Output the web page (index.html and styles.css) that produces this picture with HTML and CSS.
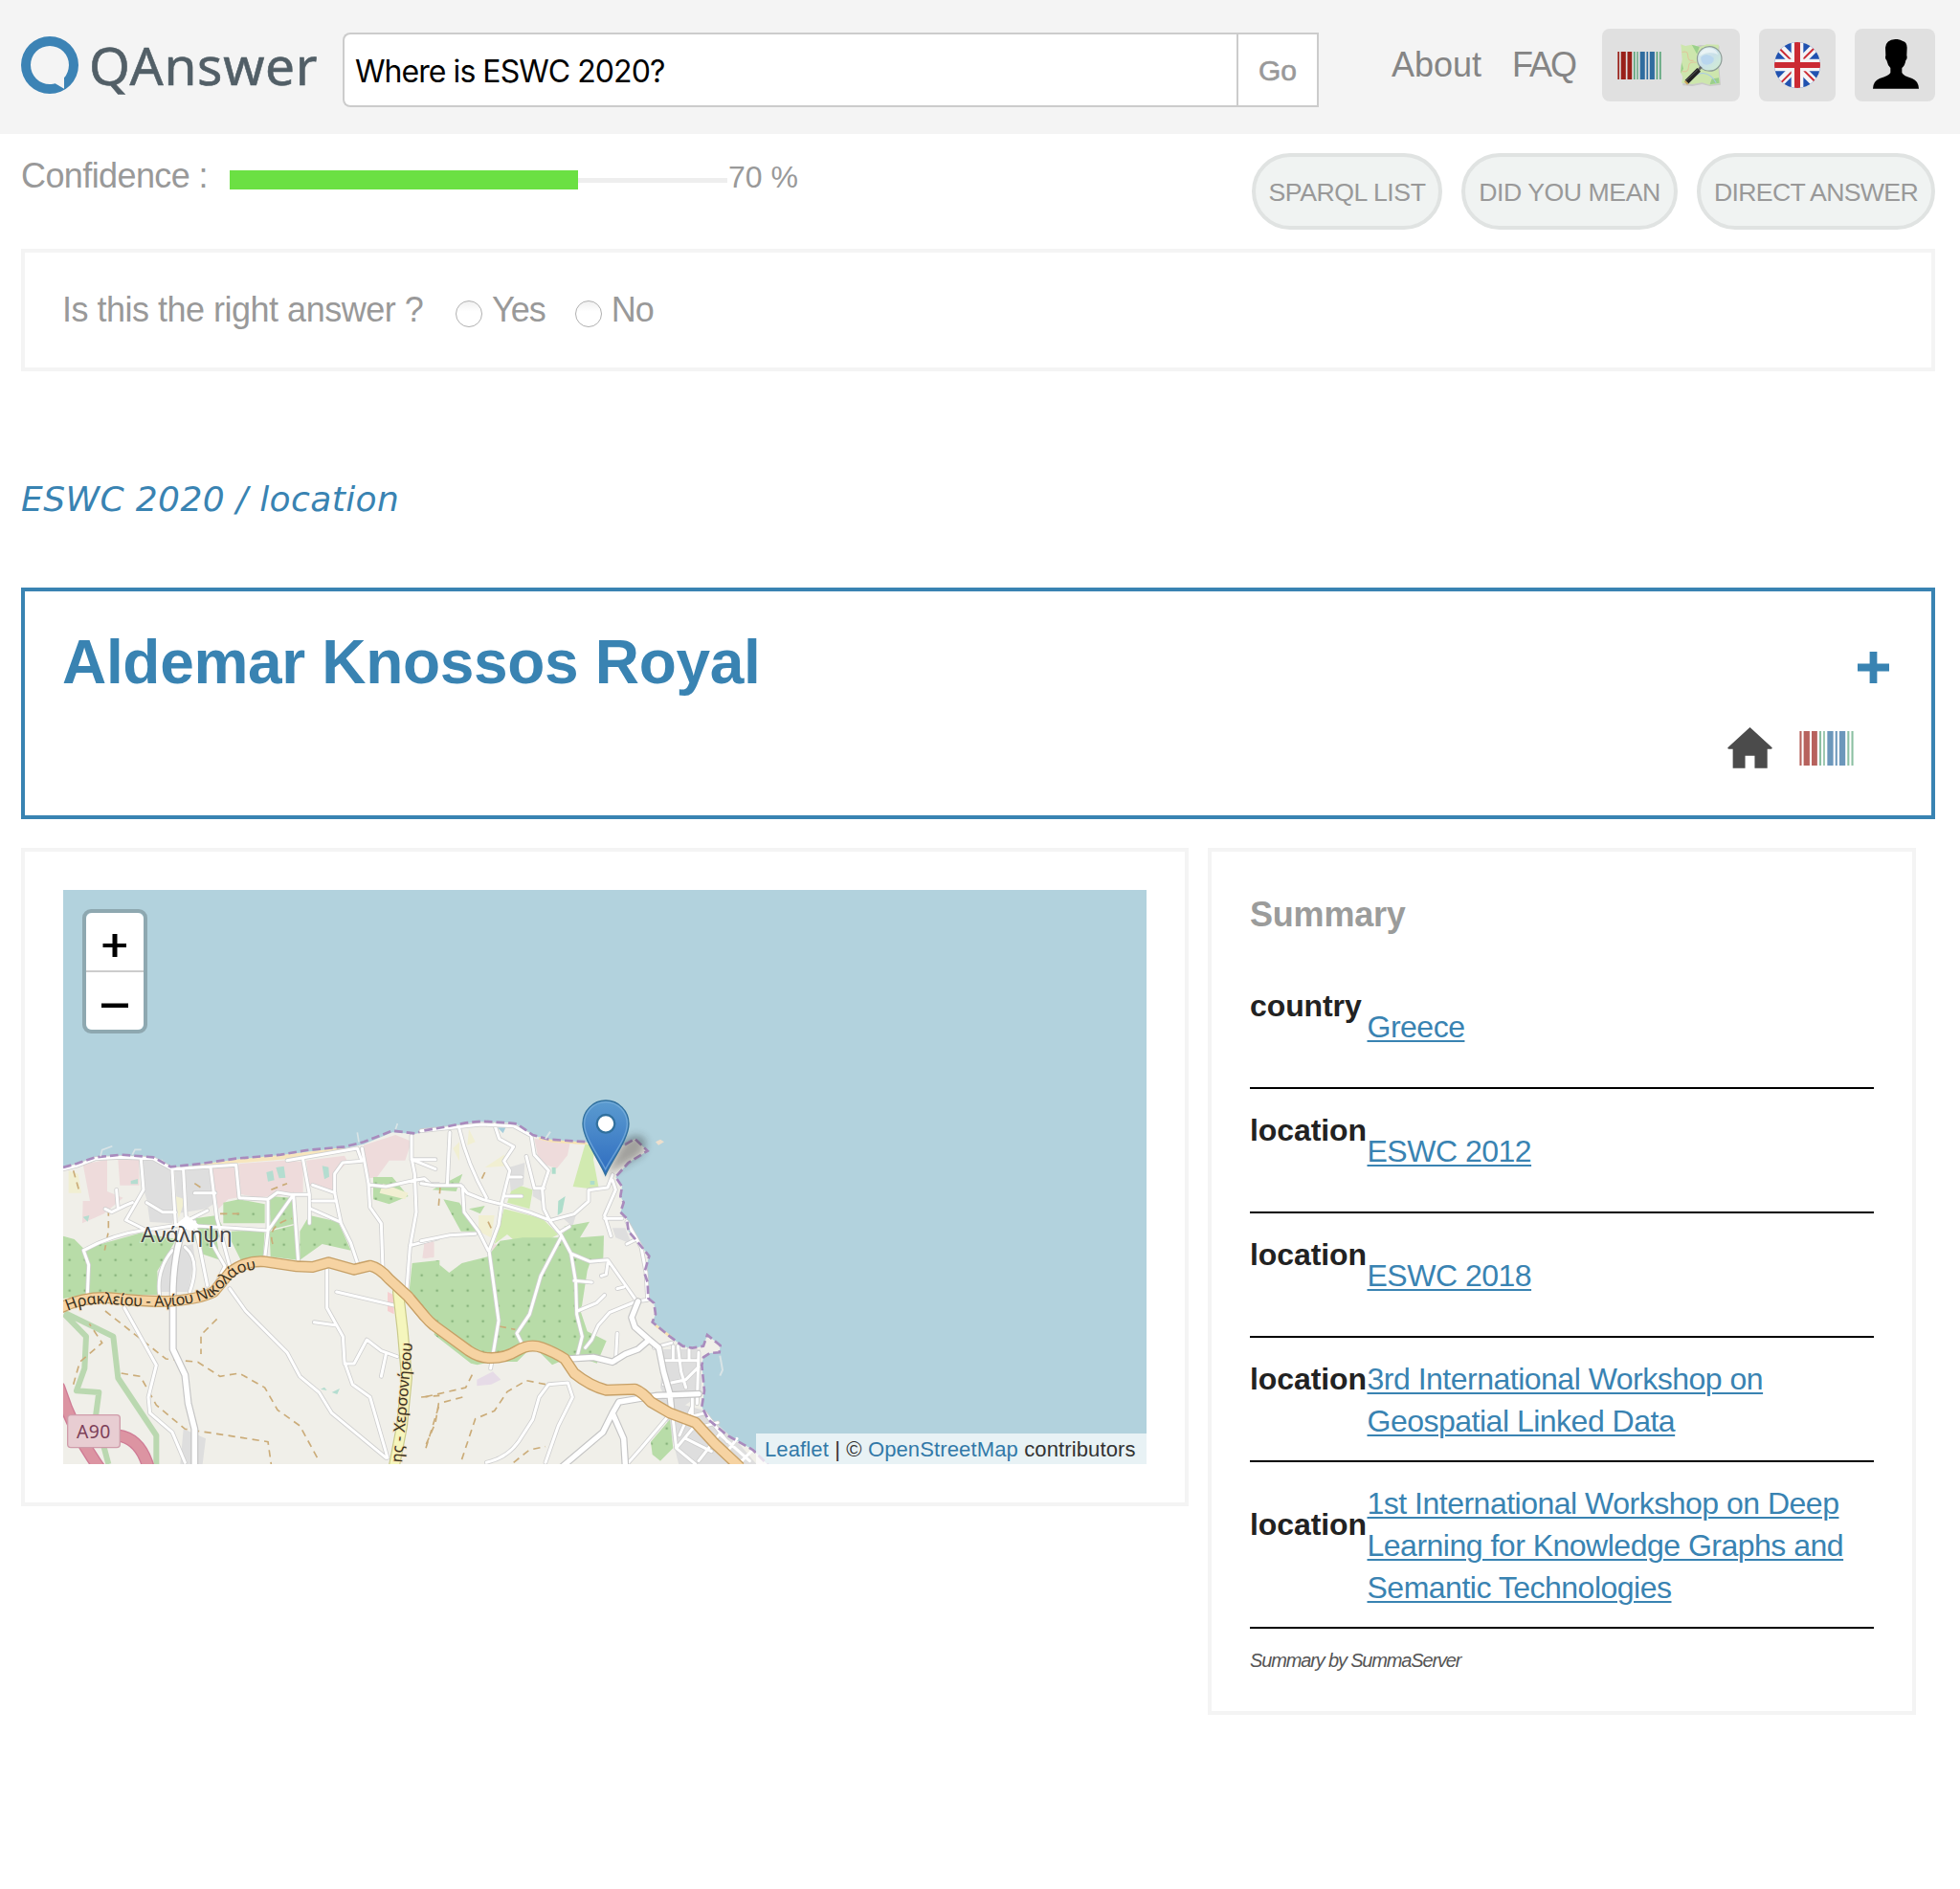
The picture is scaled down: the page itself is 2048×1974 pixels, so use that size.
FILE: index.html
```html
<!DOCTYPE html>
<html lang="en">
<head>
<meta charset="utf-8">
<title>QAnswer</title>
<link rel="stylesheet" href="styles.css">
</head>
<body>
<svg class="defs" aria-hidden="true">
  <symbol id="barcode" viewBox="0 0 136 86" preserveAspectRatio="none">
    <g fill="#992019"><path d="M1 0h5v86H1zM11 0h15v86H11zM31 0h14v86H31z"/></g>
    <g fill="#5ba57b"><path d="M50 0h5v86h-5zM60 0h4v86h-4zM120 0h5v86h-5zM130 0h5v86h-5z"/></g>
    <g fill="#2f6c9f"><path d="M70 0h15v86H70zM90 0h5v86h-5zM100 0h15v86h-15z"/></g>
  </symbol>
</svg>

<header class="header">
  <a class="logo">
    <svg class="logo-mark" viewBox="0 0 180 180"><path fill="#3c83b5" fill-rule="evenodd" d="M90 0a90 90 0 1 0 0 180a90 90 0 1 0 0-180zM90 30A60 60 0 0 1 150 90Q149 115 135 130V164L107 148Q98 151 90 150A60 60 0 0 1 90 30z"/></svg>
    <span class="logo-text">QAnswer</span>
  </a>
  <form class="search">
    <input class="search-input" type="text" value="Where is ESWC 2020?">
    <button class="search-go" type="button">Go</button>
  </form>
  <nav class="nav"><a>About</a><a class="faq">FAQ</a></nav>
  <div class="tools">
    <button class="tool tool-kb" type="button">
      <svg class="kb-wikidata"><use href="#barcode"/></svg>
      <svg class="kb-osm" viewBox="0 0 140 140">
        <defs><linearGradient id="lens" x1="0" y1="0" x2="1" y2="1"><stop offset="0" stop-color="#e2f0ee"/><stop offset=".5" stop-color="#c9e0e9"/><stop offset="1" stop-color="#d3f0cf"/></linearGradient></defs>
        <path fill="#c9c9c9" d="M8 8l26 6 30-8 60 4-2 50 6 70-34 4-24-6-30 6-30-2z"/>
        <path fill="#cde6ad" d="M4 4l14 5 20-4 26 7 20-8 38 1-4 50 8 70-32 5-24-7-30 5-34-4 4-18-8-16 6-40z"/>
        <path fill="#9bd08c" d="M38 5l24 7-8 22zM100 112l22-4 2 16-30 5zM6 60l6 20-8 14z"/>
        <path fill="none" stroke="#e0c49c" stroke-width="3" d="M8 28q18-6 18 12t18 14M8 88q20 4 20-14t24-14"/>
        <path fill="none" stroke="#a8c8e8" stroke-width="3" d="M30 122q20-30 44-28t40 30"/>
        <circle cx="93" cy="49" r="38" fill="url(#lens)" stroke="#8d9c96" stroke-width="3.500"/>
        <path fill="#b9d6ee" d="M66 44q18-18 40 2 4 18-22 22-18-2-18-24z"/>
        <path fill="#fff" opacity=".5" d="M62 40q8-24 32-24 20 2 26 20-30-14-58 4z"/>
        <path stroke="#666" stroke-width="8" d="M67 74l-9 11"/>
        <path stroke="#222" stroke-width="15" d="M60 83L22 121"/>
        <path stroke="#777" stroke-width="2" d="M56 83L20 117"/>
        <path stroke="#c9a35b" stroke-width="14" d="M23 121l-4 4"/>
      </svg>
    </button>
    <button class="tool tool-lang" type="button">
      <svg class="flag" viewBox="0 0 144 144">
        <clipPath id="disc"><circle cx="72" cy="72" r="72"/></clipPath>
        <g clip-path="url(#disc)">
          <path fill="#2152b0" d="M0 0h144v144H0z"/>
          <path stroke="#f4f4f6" stroke-width="27" d="M0 0l144 144M144 0L0 144"/>
          <path stroke="#cb2a33" stroke-width="6" d="M14 18l44 44M126 18L82 62M18 130l44-44M130 126L86 82"/>
          <path fill="#f4f4f6" d="M53 0h38v144H53zM0 53h144v38H0z"/>
          <path fill="#cb2a33" d="M63 0h18v144H63zM0 63h144v18H0z"/>
        </g>
      </svg>
    </button>
    <button class="tool tool-user" type="button">
      <svg class="user" viewBox="0 0 144 156"><path d="M70 0q14-1 24 6 12 2 13 20l-1 25q3 9-3 15-2 16-12 24v15q4 10 32 18 20 8 21 32H0q1-24 21-32 30-9 34-18V90q-9-9-12-24-6-6-3-15l-1-25Q41 2 70 0z"/></svg>
    </button>
  </div>
</header>

<main class="page">
  <section class="status">
    <div class="confidence">
      <span class="confidence-label">Confidence :</span>
      <div class="meter"><div class="meter-fill" style="width:70%"></div></div>
      <span class="confidence-value">70 %</span>
    </div>
    <div class="pills">
      <button class="pill pill-list" type="button">SPARQL LIST</button>
      <button class="pill pill-mean" type="button">DID YOU MEAN</button>
      <button class="pill pill-direct" type="button">DIRECT ANSWER</button>
    </div>
  </section>

  <section class="card feedback">
    <span class="feedback-question">Is this the right answer ?</span>
    <label class="choice"><input type="radio" name="ok">Yes</label>
    <label class="choice"><input type="radio" name="ok">No</label>
  </section>

  <h2 class="interpretation">ESWC 2020 / location</h2>

  <section class="answer">
    <div class="answer-head">
      <h1 class="answer-title">Aldemar Knossos Royal</h1>
      <svg class="plus" viewBox="0 0 34 34"><path fill="#3983b2" d="M13 0h8v13h13v8H21v13h-8V21H0v-8h13z"/></svg>
    </div>
    <div class="answer-links">
      <svg class="home" viewBox="0 0 140 130"><path fill="#4b4b4b" d="M70 0l70 64q1 5-4 5h-11v60H85V90H55v39H16V69H4q-5 0-4-5z"/></svg>
      <svg class="source"><use href="#barcode"/></svg>
    </div>
  </section>

  <div class="columns">
    <section class="card map-card">
      <div class="map">
        <svg class="map-tiles" viewBox="66 930 1132 600">
          <defs>
            <pattern id="orchard" width="48" height="48" patternUnits="userSpaceOnUse" x="14" y="26"><path fill="#b8dca8" d="M0 0h48v48H0z"/><circle cx="24" cy="24" r="4" fill="#87b37c"/></pattern>
            <pattern id="orchard-east" width="48" height="48" patternUnits="userSpaceOnUse" x="26" y="26"><path fill="#b8dca8" d="M0 0h48v48H0z"/><circle cx="24" cy="24" r="4" fill="#87b37c"/></pattern>
            <linearGradient id="pin" x1="0" y1="0" x2="0" y2="1"><stop offset="0" stop-color="#5b9bd0"/><stop offset="1" stop-color="#2e6cc0"/></linearGradient>
            <filter id="soft" x="-30%" y="-30%" width="160%" height="160%"><feGaussianBlur stdDeviation="12"/></filter>
            <path id="main-road-label" d="M32 690Q90 662 180 670T320 676Q420 674 492 642Q532 602 562 577Q590 560 660 556"/>
          </defs>
          <path fill="#b2d2dd" d="M66 930h1132v600H66z"/>

          <g transform="translate(60 1140) scale(.33333)">
            <path fill="#f0efe9" d="M18 245L60 235 120 212 200 206 300 212 350 243 450 234 560 217 700 205 780 192 900 180 960 167 1050 130 1120 135 1202 117V1175H18z"/>
            <g fill="#eedbdb"><path d="M80 230l76-15v100l50 20-60 50-68 30 2-70h22zM190 216h66v80h-60zM480 240l90-8 5 100-40 8-30 30-20-90zM570 228l140-10 60 4v100l-140 12-55-10zM780 218l120-15 10 20-40 40v50l-80-18zM960 170l100-32 50 20-20 60-50 0-40 55-30 0zM1150 480l30-4v44l-30 6z"/></g>
            <g fill="#dedede"><path d="M268 215h60l36 35 6 130-10 35-70-4-10-70-15-50zM368 250l110-6 18 106-30 20-90 14zM340 500l85-20 5 40-20 110h-90l-5-60zM395 1060l70 30-10 80h-70z"/></g>
            <path fill="#f7e6bd" d="M400 236l170-22 190-20 140-18v14L760 210l-190 16-130 12z"/>
            <path fill="url(#orchard)" d="M18 455l35 10 30 30 180-50 110 20-60 100 4 75-200-3-99 14zM430 400l70-10 20 40-20 40 10 60-60-20-20-50zM520 350l50-10 80 15v60l-130 0zM665 330l70 5 15 80-82 20zM545 440l105-4-5 85-70 10-30-60zM665 440l80-20 8 110-85-10zM760 440l30-50 90 20 40 90-90-20-70 50zM990 270l60 0 50 60-60 25-50-15z"/>
            <path fill="url(#orchard)" d="M1112 540l90-10v215l-100-110z"/>
            <g fill="#f1efd2"><path d="M35 250l30 10 10 60-40 0zM1020 290l80 30-10 20-80-20zM370 330l30 10-20 60z"/></g>
            <path fill="#f6cfd0" d="M1035 630l20 10v60l-20-10z"/>
            <path fill="#b4ddd0" d="M655 255l20-5 5 30-20 4zM685 240l25-4 5 36-20 2zM830 235l20 4 2 30-15 8zM80 395l20-5-5 20zM230 282l22-6v16h-22zM825 935l12-6 8 10zM860 945l25-12-8 18z"/>
            <path fill="none" stroke="#b0d3a6" stroke-width="18" stroke-linejoin="round" opacity=".85" d="M22 695L175 770 190 900 310 1080V1175M22 700L90 770 85 870 60 940 130 945 120 1020 160 1170"/>
            <g fill="none" stroke="#cbac79" stroke-width="5" stroke-dasharray="22 16"><path d="M150 690l190 150 100 10 70 45 60-10 80 45 40 70 70 50 60 110M500 715l-50 50v60M200 885l60 10 50 90 90 75 100 15 160 25 10 70M160 370v70l-12 60M50 250l20 70M50 920l20-70 70-60-40-60M1200 955l-60 5M1195 990l-40 130M675 480q-20-60 60-80M510 385h60M430 290l30 20M670 310l50-20"/></g>
            <g fill="none" stroke-linejoin="round" stroke-linecap="round">
              <g stroke="#cfcfcf" stroke-width="14">
                <path d="M18 245L60 235 120 212 200 208 300 212 360 245 560 232 570 335 660 340 690 318 730 325 785 325M262 215l8 95-55 95 60 30M82 500l16 45-4 95M82 500Q170 450 280 435L380 420 550 430 660 438 740 325 755 535M660 340v100l-10 85M395 250l8 150M480 240l20 160 40 150M360 250l10 165M280 350l50 30h40M430 320h65M400 410l70-35M770 215l20 110v90M720 218l220-38 14 40-60 5-25 35v60l20 95 30 60 25 75M800 295l70 25M800 345h75M795 370l90 40M955 180l20 110 5 75 35 50 5 140M980 295l50 5 90-20 30-5 20 18h35M1110 140v70l10 50 5 120-20 110-10 130M1110 215h75M1110 215l75 30M1105 485l95-25M150 370l20 10 45-22 20-8M185 310l5 60M360 500Q310 560 320 640M400 490Q450 530 415 630M430 410L470 610M480 470l45 80-30 60M210 680L310 860 285 960 290 1010 360 1070 400 1165M540 620L590 690 720 820 760 895 820 945 860 1010 1030 1150M845 560v120l50 90 5 80 25 70 55 40 55 190M805 725l70 10M875 630l180 42M900 855h30l40-75 45 35 50 18M1030 825l-15 70"/>
              </g>
              <g stroke="#fff" stroke-width="9">
                <path d="M18 245L60 235 120 212 200 208 300 212 360 245 560 232 570 335 660 340 690 318 730 325 785 325M262 215l8 95-55 95 60 30M82 500l16 45-4 95M82 500Q170 450 280 435L380 420 550 430 660 438 740 325 755 535M660 340v100l-10 85M395 250l8 150M480 240l20 160 40 150M360 250l10 165M280 350l50 30h40M430 320h65M400 410l70-35M770 215l20 110v90M720 218l220-38 14 40-60 5-25 35v60l20 95 30 60 25 75M800 295l70 25M800 345h75M795 370l90 40M955 180l20 110 5 75 35 50 5 140M980 295l50 5 90-20 30-5 20 18h35M1110 140v70l10 50 5 120-20 110-10 130M1110 215h75M1110 215l75 30M1105 485l95-25M150 370l20 10 45-22 20-8M185 310l5 60M360 500Q310 560 320 640M400 490Q450 530 415 630M430 410L470 610M480 470l45 80-30 60M210 680L310 860 285 960 290 1010 360 1070 400 1165M540 620L590 690 720 820 760 895 820 945 860 1010 1030 1150M845 560v120l50 90 5 80 25 70 55 40 55 190M805 725l70 10M875 630l180 42M900 855h30l40-75 45 35 50 18M1030 825l-15 70"/>
              </g>
              <path stroke="#c4c4c4" stroke-width="24" d="M400 410Q360 520 362 660V810L400 890 410 980 430 1060V1175"/>
              <path stroke="#fff" stroke-width="17" d="M400 410Q360 520 362 660V810L400 890 410 980 430 1060V1175"/>
              <path stroke="#c9c98a" stroke-width="36" d="M1068 630L1082 750 1095 900 1080 1050 1055 1180"/>
              <path stroke="#f5f6bd" stroke-width="29" d="M1068 630L1082 750 1095 900 1080 1050 1055 1180"/>
              <path stroke="#c7a066" stroke-width="36" d="M10 680Q90 640 180 650T340 660Q440 655 490 630L540 570Q590 530 650 535L750 550 800 552 850 538 930 560 980 548Q1010 555 1040 590L1100 645 1150 705"/>
              <path stroke="#f6d3a2" stroke-width="28" d="M10 680Q90 640 180 650T340 660Q440 655 490 630L540 570Q590 530 650 535L750 550 800 552 850 538 930 560 980 548Q1010 555 1040 590L1100 645 1150 705"/>
              <path stroke="#cf7b95" stroke-width="40" d="M5 930Q50 1070 130 1180M190 1080Q260 1090 285 1180"/>
              <path stroke="#dc94a2" stroke-width="32" d="M5 930Q50 1070 130 1180M190 1080Q260 1090 285 1180"/>
            </g>
            <path fill="#fff" d="M370 420l35-30 45 35-35 12z"/>
            <path fill="none" stroke="#a98bbd" stroke-width="8" stroke-dasharray="26 12" d="M18 240L60 228 120 208 200 200 300 208 355 238 450 228 560 212 700 200 780 186 900 175 960 160 1050 125 1120 133 1150 124"/>
            <path fill="none" stroke="#d9e4e6" stroke-width="5" d="M135 205l5-20 32-12M235 200l8-16h20M940 130l5 30M1060 120l6-18"/>
            <rect x="32" y="1016" width="164" height="102" rx="10" fill="#e8cdd2" stroke="#cf9caa" stroke-width="4"/>
            <text x="60" y="1088" class="shield" textLength="106">A90</text>
          </g>

          <g transform="translate(440 1140) scale(.33333)">
            <path fill="#f0efe9" d="M58 117L140 102 190 97 270 100 300 105 350 140 400 152 520 162 640 170 670 150 710 188 650 225 610 270 630 300 625 330 635 350 625 380 645 400 650 440 680 475 715 518 700 570 710 600 712 650 730 665 735 700 725 725 780 770 820 800 850 808 885 800 897 765 938 798 935 820 905 822 885 835 880 860 888 940 880 990 900 1030 960 1080 1040 1125 1090 1175H58z"/>
            <path fill="#eedbdb" d="M355 150l112 12-8 40-34 42-55-20zM10 480l30-8v50l-36 2zM395 420l25 20-10 16-20-10zM225 480l30 5-5 20-28-4z"/>
            <path fill="#f1efd2" d="M150 120l20 40-25 10zM200 240l60-40 10 35zM100 180l20-20v60zM180 390l50 0-10 70-40-20zM510 800l60 0-40 30z"/>
            <path fill="#d1eab0" d="M515 165l30 10-5 40 18 95-82-10 20-70zM260 370l120 30 50 50-100 50-60-50-40 30zM290 290l60 20-10 60-70-20z"/>
            <path fill="#dedede" d="M275 240l50-15-4 70-40 20zM350 310l34-10v50l-34-20zM445 400l40-10-10 35zM600 430l40 0 20 50-50-20zM760 810l115 0 5 140-90 60-40-80zM740 960l140 40 120 110 60 70-250 0-30-120z"/>
            <path fill="url(#orchard-east)" d="M58 545l30 25 40-30 80-20 40-50 70-10 110 0 30-25-10-10 80-15-30 50 75-6-2 70-40 10-10 30-20 130 20 60 60 30-30 70-70-25-70 30-60-60-50 50-80 0-45 10-20-5-115-90zM70 340l50 10 55 90-50 0zM150 370l50-10-15 25zM35 310l95-50-20 55zM720 1100l60-70 10 90-40 40-25-20z"/>
            <path fill="none" stroke="#f0efe9" stroke-width="20" d="M500 690l75-50"/>
            <path fill="#e6dbe7" d="M175 905l50-25 25 25-30 15-45 5z"/>
            <g fill="#aeddcb"><path d="M430 345l22-15-10 50-14 10zM530 282h14v12h-14zM410 240h12v20h-12z"/></g>
            <path fill="#a6cedc" d="M240 115h25l-8 18z"/>
            <g fill="none" stroke="#cbac79" stroke-width="5" stroke-dasharray="22 16"><path d="M160 890l-20 40-130 30M130 960l-75 20-10 60-30 70M390 920l-60-12-60 35-40 60-60 25-20 60-30 90M290 1165l50-40 50-10M60 300l-5 60M200 255l-12 25M245 738l50 10M210 410l12 25"/></g>
            <g fill="none" stroke-linejoin="round" stroke-linecap="round">
              <g stroke="#cfcfcf" stroke-width="14">
                <path d="M0 125L190 105 290 110 345 140 355 200 400 250 380 310 385 370 405 410 438 450 470 510 485 600 488 700 505 770 490 830M90 130l-8 165M120 120Q145 230 205 335M230 105l15 45 45 25-30 45 18 30-25 100-10 70-30 80 30 220-25 150M0 290l40 6h85l20 25 50 20 60 15 85 25 65 25 75-20 45-40v-35l60-8 15-40M130 300l5 80 45 60 30 60M0 470l90-18 80-4M330 205l25 100h30M280 270h35M265 330h50M438 460L375 580 340 700 300 760 315 790M440 440l25-15M600 280l10 30-35 80 20 65M575 400h55M645 410l45 80 15 80 5 85-35 5-85 35-35 40-20 45-20 25M470 510l60 25 55-5 60 85 35 50M585 540l-5 35-15 5M480 595l55 5M490 690l60-25 25-25M615 620l20-5M615 760l-5 90M645 480l30-15M205 1165Q270 1150 305 1100L350 1030 370 960 400 920 460 915 475 960 430 1050 390 1165M770 1025L690 1120 650 1165M730 805l55-15M760 845h110M805 800l10 80 15 50M760 920l70-15 40-40M790 800v45M840 810v30M870 820l-5 160M790 1030l10 90 60 50M850 990l-40 90M800 1120l50-60 80-20M830 1090l80 40M870 1160l70-90M850 960v60l40-10 70 90"/>
              </g>
              <g stroke="#fff" stroke-width="9">
                <path d="M0 125L190 105 290 110 345 140 355 200 400 250 380 310 385 370 405 410 438 450 470 510 485 600 488 700 505 770 490 830M90 130l-8 165M120 120Q145 230 205 335M230 105l15 45 45 25-30 45 18 30-25 100-10 70-30 80 30 220-25 150M0 290l40 6h85l20 25 50 20 60 15 85 25 65 25 75-20 45-40v-35l60-8 15-40M130 300l5 80 45 60 30 60M0 470l90-18 80-4M330 205l25 100h30M280 270h35M265 330h50M438 460L375 580 340 700 300 760 315 790M440 440l25-15M600 280l10 30-35 80 20 65M575 400h55M645 410l45 80 15 80 5 85-35 5-85 35-35 40-20 45-20 25M470 510l60 25 55-5 60 85 35 50M585 540l-5 35-15 5M480 595l55 5M490 690l60-25 25-25M615 620l20-5M615 760l-5 90M645 480l30-15M205 1165Q270 1150 305 1100L350 1030 370 960 400 920 460 915 475 960 430 1050 390 1165M770 1025L690 1120 650 1165M730 805l55-15M760 845h110M805 800l10 80 15 50M760 920l70-15 40-40M790 800v45M840 810v30M870 820l-5 160M790 1030l10 90 60 50M850 990l-40 90M800 1120l50-60 80-20M830 1090l80 40M870 1160l70-90M850 960v60l40-10 70 90M940 1080l90 80M960 1130l30-40M1000 1165l40-40"/>
              </g>
              <path stroke="#c4c4c4" stroke-width="23" d="M460 840L540 835 600 850 640 825 680 810 715 780 670 740 660 710 680 660M715 780L745 805 760 880 780 950 785 1000M870 950L740 955 620 975 600 1010 570 1070 440 1180M600 1010L635 1090 640 1170"/>
              <path stroke="#fff" stroke-width="16" d="M460 840L540 835 600 850 640 825 680 810 715 780 670 740 660 710 680 660M715 780L745 805 760 880 780 950 785 1000M870 950L740 955 620 975 600 1010 570 1070 440 1180M600 1010L635 1090 640 1170"/>
              <path stroke="#c7a066" stroke-width="36" stroke-linecap="butt" d="M-36 650L10 705Q24 722 40 735L150 815Q180 835 210 837 260 840 300 815T380 805 450 840L480 885Q530 925 580 938L670 935Q695 945 720 975L780 1010 860 1040 920 1105 1000 1180"/>
              <path stroke="#f6d3a2" stroke-width="28" d="M-36 650L10 705Q24 722 40 735L150 815Q180 835 210 837 260 840 300 815T380 805 450 840L480 885Q530 925 580 938L670 935Q695 945 720 975L780 1010 860 1040 920 1105 1000 1180"/>
            </g>
            <path fill="none" stroke="#f7e3b2" stroke-width="8" d="M370 148l40 9 110 8M735 735l50 38"/>
            <path fill="none" stroke="#a98bbd" stroke-width="8" stroke-dasharray="26 12" d="M10 124L80 112 140 100 190 95 270 100 300 103 350 138 400 152 520 160 640 168 670 150 710 188 650 225 610 270 630 300 625 330 635 350 625 380 645 400 650 440 680 475 715 518 700 570 710 600 712 650 730 665 735 700 725 725 780 770 820 800 850 806 885 800 897 765 938 798 935 820 905 822 885 835 880 860 888 940 880 990 900 1030 960 1080 1040 1125 1090 1175"/>
            <path fill="none" stroke="#d9e4e6" stroke-width="6" d="M390 150l15-22M937 830l8 45-8 18"/>
            <path fill="#eddfcd" d="M735 160l15-8 12 8-18 10z"/>
            <path fill="#222" opacity=".38" filter="url(#soft)" d="M580 264L620 180Q655 125 695 145 718 170 685 205z"/>
            <path fill="url(#pin)" stroke="#31709e" stroke-width="4" d="M578 264C560 220 507 150 507 103A72 73 0 0 1 651 103C651 150 596 220 578 264z"/>
            <path fill="none" stroke="#7db2dd" stroke-width="4" opacity=".7" d="M578 246C560 208 512 148 512 103A67 68 0 0 1 646 103C646 148 596 208 578 246z"/>
            <circle cx="579" cy="103" r="28" fill="#fff" stroke="#31709e" stroke-width="7"/>
          </g>

          <g class="map-label" transform="translate(60 1140) scale(.33333)">
            <text x="262" y="473" font-size="65" textLength="286" lengthAdjust="spacingAndGlyphs">Ανάληψη</text>
            <text class="road-name" font-size="49"><textPath href="#main-road-label" textLength="628">Ηρακλείου - Αγίου Νικολάου</textPath></text>
            <text class="road-name" font-size="49" transform="translate(1080 1166) rotate(-85)" textLength="378" lengthAdjust="spacingAndGlyphs">ης - Χερσονήσου</text>
          </g>
        </svg>
        <div class="zoom">
          <a class="zoom-btn"><svg viewBox="0 0 28 26"><path d="M11.500 1h5v10h9.500v4H16.500v10h-5V15H1.500v-4h10z"/></svg></a>
          <a class="zoom-btn"><svg viewBox="0 0 28 26"><path d="M0 10.500h28v4.500H0z"/></svg></a>
        </div>
        <div class="attribution"><a>Leaflet</a> | © <a>OpenStreetMap</a> contributors</div>
      </div>
    </section>

    <section class="card summary">
      <h3 class="summary-title">Summary</h3>
      <dl class="facts">
        <div class="fact"><dt>country</dt><dd><a>Greece</a></dd></div>
        <div class="fact"><dt>location</dt><dd><a>ESWC 2012</a></dd></div>
        <div class="fact"><dt>location</dt><dd><a>ESWC 2018</a></dd></div>
        <div class="fact"><dt>location</dt><dd><a>3rd International Workshop on<br>Geospatial Linked Data</a></dd></div>
        <div class="fact"><dt>location</dt><dd><a>1st International Workshop on Deep<br>Learning for Knowledge Graphs and<br>Semantic Technologies</a></dd></div>
      </dl>
      <p class="credit">Summary by SummaServer</p>
    </section>
  </div>
</main>
</body>
</html>
```
FILE: styles.css
```css
* { box-sizing: border-box; }

body {
  margin: 0;
  background: #fff;
  color: #222;
  font-family: "Liberation Sans", Arial, sans-serif;
}

h1, h2, h3, p, dl, dd { margin: 0; }
svg { display: block; }
button, input { font-family: inherit; margin: 0; padding: 0; }
.defs { display: none; }

.header {
  display: flex;
  align-items: center;
  height: 140px;
  padding: 0 26px 4px 22px;
  background: #f4f4f4;
}

.logo {
  display: flex;
  align-items: center;
  gap: 11px;
  width: 336px;
}
.logo-mark { width: 60px; height: 60px; }
.logo-text {
  color: #525f67;
  font: 55px/60px "Noto Sans", sans-serif;
  letter-spacing: 0.7px;
  -webkit-text-stroke: 0.6px #525f67;
}

.search {
  display: flex;
  width: 1020px;
  height: 78px;
  margin-top: 10px;
}
.search-input {
  flex: 1;
  padding: 2px 11px 0 11px;
  border: 2px solid #ccc;
  border-right: 0;
  border-radius: 8px 0 0 8px;
  background: #fff;
  color: #000;
  font: 32px Inter, sans-serif;
  letter-spacing: -0.95px;
}
.search-go {
  width: 86px;
  padding-top: 2px;
  border: 2px solid #ccc;
  background: #fff;
  color: #999;
  font-size: 30px;
  -webkit-text-stroke: 0.6px #999;
}

.nav {
  display: flex;
  gap: 32px;
  margin-left: 76px;
  color: #858585;
  font-size: 36px;
  line-height: 44px;
}
.faq { letter-spacing: -2px; }

.tools {
  display: flex;
  gap: 20px;
  margin-left: auto;
}
.tool {
  display: flex;
  align-items: center;
  justify-content: center;
  height: 76px;
  border: 0;
  border-radius: 8px;
  background: #e0e0e0;
}
.tool-kb { width: 144px; gap: 19px; }
.tool-lang { width: 80px; }
.tool-user { width: 84px; padding-left: 2px; }
.kb-wikidata { width: 46px; height: 29px; }
.kb-osm { width: 47px; height: 47px; }
.flag { width: 48px; height: 48px; }
.user { width: 48px; height: 52px; margin-bottom: 2px; }

.page { padding: 0 26px 0 22px; }

.status {
  display: flex;
  justify-content: space-between;
  height: 120px;
  padding-top: 20px;
}
.confidence {
  display: flex;
  align-items: center;
  height: 48px;
  color: #999;
  line-height: 44px;
}
.confidence-label { width: 218px; font-size: 36px; letter-spacing: -0.6px; }
.confidence-value { padding: 2px 0 0 1px; font-size: 32px; }
.meter {
  display: flex;
  align-items: center;
  width: 520px;
  height: 20px;
  margin-top: 8px;
  background: linear-gradient(#eee, #eee) center / 100% 5px no-repeat;
}
.meter-fill { height: 20px; background: #6be043; }

.pills { display: flex; gap: 20px; }
.pill {
  height: 80px;
  padding-top: 2px;
  border: 4px solid #e0e3e2;
  border-radius: 40px;
  background: #f0f3f2;
  color: #999;
  font-size: 26.67px;
  letter-spacing: -0.45px;
  white-space: nowrap;
}
.pill-list { width: 199px; }
.pill-mean { width: 226px; }
.pill-direct { width: 249px; letter-spacing: -0.65px; }

.card { border: 4px solid #f4f4f4; background: #fff; }

.feedback {
  display: flex;
  align-items: center;
  height: 128px;
  padding: 0 39px;
  color: #999;
  font-size: 36px;
  letter-spacing: -0.5px;
}
.feedback-question { width: 411px; }
.choice { display: flex; align-items: center; gap: 10px; margin-right: 31px; letter-spacing: -1px; }
.choice input {
  appearance: none;
  width: 28px;
  height: 28px;
  margin-top: 8px;
  border: 1.500px solid #b0b0b0;
  border-radius: 50%;
  background: linear-gradient(#f0f0f0, #fff 40%);
}

.interpretation {
  margin: 112px 0 70px;
  color: #3983b2;
  font: italic 36px/44px "DejaVu Sans", Verdana, sans-serif;
  letter-spacing: 0.4px;
}

.answer {
  height: 242px;
  padding: 36px 40px 0 39px;
  border: 4px solid #3983b2;
}
.answer-head { display: flex; justify-content: space-between; }
.answer-title {
  color: #3983b2;
  font-size: 64px;
  line-height: 76px;
  letter-spacing: -0.32px;
}
.plus { width: 33px; height: 33px; margin: 27px 4px 0 0; }
.answer-links {
  display: flex;
  justify-content: flex-end;
  align-items: center;
  gap: 28px;
  margin: 30px 41px 0 0;
}
.home { width: 47px; height: 43px; }
.source { width: 57px; height: 36px; opacity: .7; }

.columns {
  display: flex;
  align-items: flex-start;
  gap: 20px;
  margin-top: 30px;
}

.map-card { width: 1220px; padding: 40px; }
.map { position: relative; height: 600px; }
.map-tiles { width: 1132px; height: 600px; }
.map-label text {
  fill: #444;
  stroke: rgba(255, 255, 255, .45);
  stroke-width: 6px;
  paint-order: stroke;
  font-family: "Noto Sans", sans-serif;
}
.map-label .road-name { fill: #383020; stroke: rgba(246, 211, 162, .5); }
.shield { fill: #7d4058; font: 58px "Noto Sans", sans-serif; }

.zoom {
  position: absolute;
  top: 20px;
  left: 20px;
  width: 68px;
  border: 4px solid rgba(0, 0, 0, .2);
  border-radius: 9px;
}
.zoom-btn {
  display: flex;
  align-items: center;
  justify-content: center;
  height: 60px;
  padding-top: 8px;
  background: #fff;
}
.zoom-btn:first-child {
  height: 62px;
  border-bottom: 2px solid #ccc;
  border-radius: 6px 6px 0 0;
}
.zoom-btn:last-child { border-radius: 0 0 6px 6px; padding-top: 10px; }
.zoom-btn svg { width: 28px; height: 26px; }

.attribution {
  position: absolute;
  right: 0;
  bottom: 0;
  width: 408px;
  height: 32px;
  padding-left: 9px;
  background: rgba(255, 255, 255, .7);
  color: #333;
  font-size: 22px;
  line-height: 33px;
  letter-spacing: 0.13px;
  white-space: nowrap;
}
.attribution a { color: #3279a8; }

.summary { width: 740px; height: 906px; padding: 40px; }
.summary-title {
  height: 78px;
  padding-top: 2px;
  color: #9b9c9b;
  font-size: 36px;
  line-height: 48px;
  letter-spacing: -0.2px;
}
.fact {
  display: flex;
  align-items: center;
  padding: 21px 0 19px;
  border-bottom: 2px solid #000;
  font-size: 32px;
  line-height: 44px;
}
.fact dt { width: 122.500px; height: 88px; flex: none; font-weight: bold; letter-spacing: -0.1px; }
.fact dd { white-space: nowrap; letter-spacing: -0.5px; }
.fact a {
  color: #3983b2;
  text-decoration: underline;
  text-decoration-thickness: 2px;
  text-underline-offset: 3px;
}
.credit {
  margin-top: 19px;
  color: #555;
  font-size: 20px;
  font-style: italic;
  line-height: 28px;
  letter-spacing: -1.15px;
}
```
